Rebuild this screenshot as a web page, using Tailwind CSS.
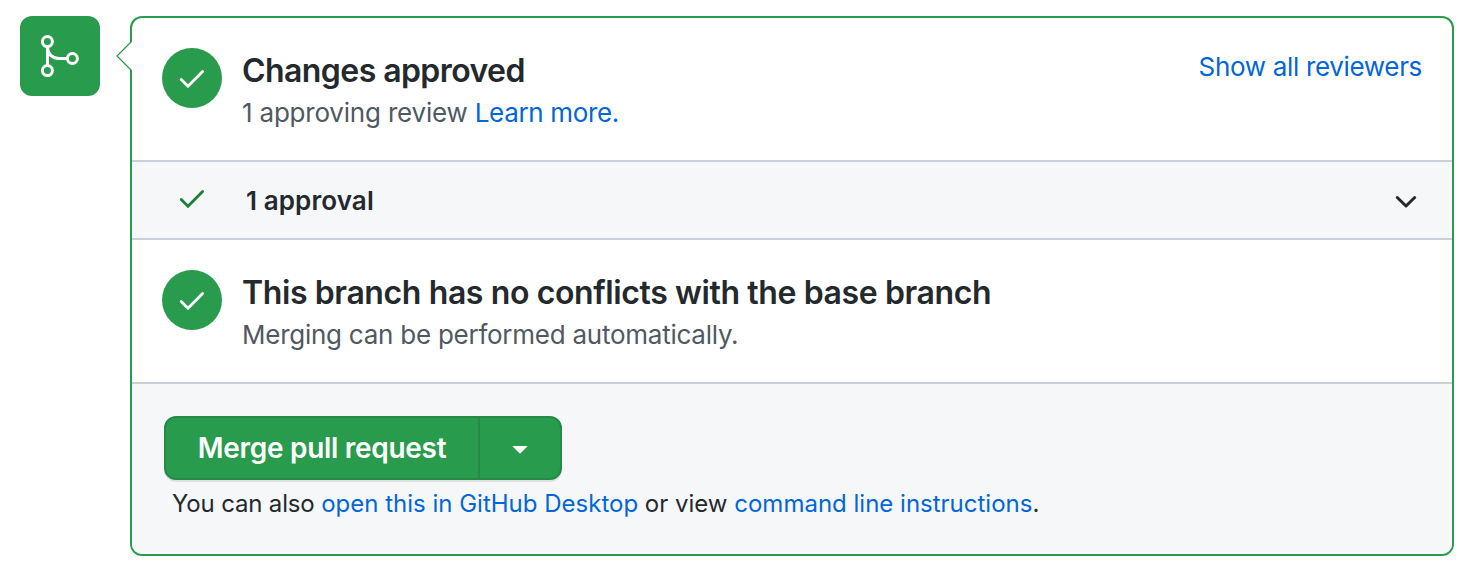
<!DOCTYPE html>
<html lang="en">
<head>
<meta charset="utf-8">
<title>Merge pull request</title>
<script src="https://cdn.jsdelivr.net/npm/@tailwindcss/browser@4"></script>
</head>
<body class="h-[570px] overflow-hidden bg-white font-['Inter',sans-serif] text-[#24292e]">
<main class="flex items-start gap-[30px] pt-4 pl-5">
  <div class="h-20 w-20 shrink-0 rounded-xl bg-[#289b4c]">
    <svg class="h-20 w-20" viewBox="0 0 80 80" fill="none" stroke="#fff" stroke-width="3">
      <circle cx="27.4" cy="25.6" r="5"/><circle cx="27.4" cy="54.6" r="5"/><circle cx="52.4" cy="42.5" r="5"/>
      <path d="M27.5 30.5v19M27.5 31c0 7 5 11.5 11.5 11.5h8.5"/>
    </svg>
  </div>
  <section class="relative h-[540px] w-[1324px] rounded-xl border-2 border-[#289b4c]">
    <svg class="absolute top-[22px] -left-4 h-8 w-4" viewBox="0 0 16 32" fill="none">
      <path d="M14 2h2v28h-2z" fill="#fff"/>
      <path d="M15.5 1.5L1 16L15.5 30.5" fill="#fff" stroke="#289b4c" stroke-width="1.2"/>
    </svg>
    <div class="flex h-36 items-start border-b-2 border-[#c8d1da] px-[30px] pt-[30px]">
      <svg class="h-[60px] w-[60px] shrink-0 rounded-full bg-[#289b4c]" viewBox="0 0 60 60" fill="none" stroke="#fff" stroke-width="2.8" stroke-linecap="round"><path d="M19.2 31.5l6.8 6.8L40.6 23.5"/></svg>
      <div class="ml-5 grow whitespace-nowrap">
        <h3 class="mt-[3px] text-[32px] leading-10 font-semibold tracking-[-0.57px]">Changes approved</h3>
        <p class="mt-[2px] text-[26px] leading-10 tracking-[-0.2px] text-[#4f5963]">1 approving review <a class="tracking-[-0.33px] text-[#0366d6]">Learn more.</a></p>
      </div>
      <a class="text-[26px] leading-[37px] tracking-[-0.33px] whitespace-nowrap text-[#0366d6]">Show all reviewers</a>
    </div>
    <div class="flex h-[78px] items-center border-b-2 border-[#c8d1da] bg-[#f5f7f9] px-[30px]">
      <svg class="h-[60px] w-[60px]" viewBox="0 0 60 60" fill="none" stroke="#1a7f37" stroke-width="2.8" stroke-linecap="round"><path d="M19.2 29.5l6.8 6.8L40.6 21.5"/></svg>
      <h4 class="mt-[2px] ml-6 grow text-[26px] leading-10 font-semibold tracking-[0.1px]">1 approval</h4>
      <svg class="h-8 w-8" viewBox="0 0 32 32" fill="none" stroke="#24292e" stroke-width="3" stroke-linecap="round" stroke-linejoin="round"><path d="M7.3 13.5L16 22l8.7-8.5"/></svg>
    </div>
    <div class="flex h-36 items-start border-b-2 border-[#c8d1da] px-[30px] pt-[30px]">
      <svg class="h-[60px] w-[60px] shrink-0 rounded-full bg-[#289b4c]" viewBox="0 0 60 60" fill="none" stroke="#fff" stroke-width="2.8" stroke-linecap="round"><path d="M19.2 31.5l6.8 6.8L40.6 23.5"/></svg>
      <div class="ml-5 whitespace-nowrap">
        <h3 class="mt-[3px] text-[32px] leading-10 font-semibold tracking-[-0.39px]">This branch has no conflicts with the base branch</h3>
        <p class="mt-[2px] text-[26px] leading-10 tracking-[-0.25px] text-[#4f5963]">Merging can be performed automatically.</p>
      </div>
    </div>
    <div class="h-[170px] rounded-b-[10px] bg-[#f5f7f9] px-8 pt-8">
      <div class="flex h-16 w-[398px] rounded-xl border-2 border-[#248a45] bg-[#289b4c] text-white shadow-[0_2px_0_rgba(27,31,36,0.1)]">
        <button class="w-[314px] border-r-2 border-[#248a45] text-[28px] leading-10 font-semibold tracking-[-0.3px] whitespace-nowrap">Merge pull request</button>
        <button class="flex grow items-center justify-center"><svg class="h-4 w-4" viewBox="0 0 16 16"><path d="M.3 6h15.4L8 13.8z" fill="#fff"/></svg></button>
      </div>
      <p class="mt-1 ml-2 text-[24px] leading-10 whitespace-nowrap"><span class="tracking-[-0.16px]">You can also </span><a class="text-[#0366d6]">open this in GitHub Desktop</a> or view <a class="text-[#0366d6]">command line instructions</a>.</p>
    </div>
  </section>
</main>
</body>
</html>
